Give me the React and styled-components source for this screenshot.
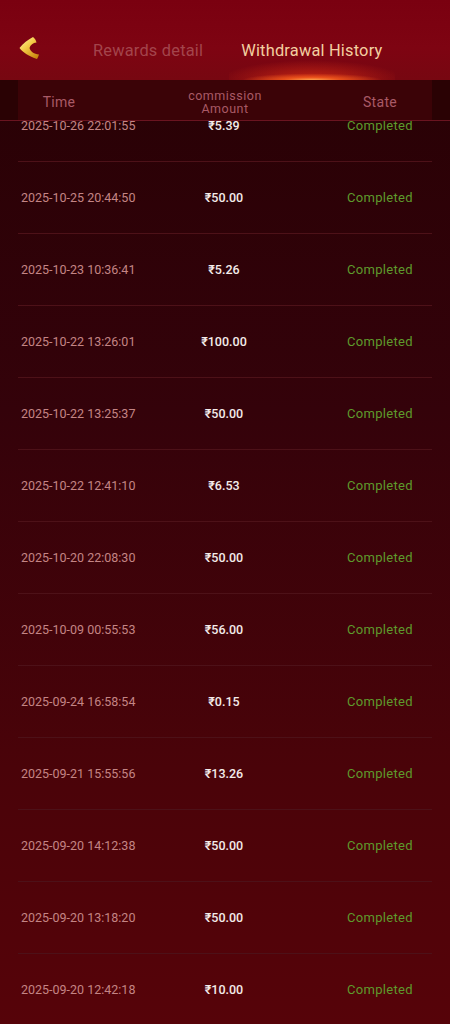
import React from 'react';
import styled, { createGlobalStyle } from 'styled-components';

const GlobalStyle = createGlobalStyle`
  html, body {
    margin: 0;
    padding: 0;
    background: #2a0204;
  }
  body {
    font-family: Roboto, "Noto Sans", sans-serif;
  }
`

const Page = styled.div`
  width: 450px;
  height: 1024px;
  overflow: hidden;
  display: flex;
  flex-direction: column;
  background: linear-gradient(180deg, #260104 0%, #34020a 40%, #4a0309 75%, #560309 100%);
`

const TopBar = styled.header`
  position: relative;
  z-index: 2;
  height: 80px;
  flex-shrink: 0;
  display: flex;
  align-items: flex-end;
  padding: 0 0 0 17px;
  box-sizing: border-box;
  background: linear-gradient(180deg, #7a0010 0%, #7e0412 60%, #770711 100%);
`

const Back = styled.button`
  width: 24px;
  height: 24px;
  padding: 0;
  margin-bottom: 20px;
  border: none;
  background: none;
  display: flex;
  align-items: center;
  justify-content: center;
`

const Tabs = styled.nav`
  display: flex;
  margin-left: 52px;
  gap: 38px;
`

const Tab = styled.div`
  position: relative;
  font-size: 16.4px;
  letter-spacing: 0.2px;
  padding-bottom: 20px;
  color: ${p => (p.active ? '#f3cfa0' : '#a3444c')};

  span {
    position: relative;
    z-index: 1;
  }

  &::after {
    content: '';
    display: ${p => (p.active ? 'block' : 'none')};
    position: absolute;
    left: -12px;
    right: -12px;
    bottom: 0;
    height: 22px;
    background:
      radial-gradient(ellipse 42% 30% at 50% 100%, rgba(255, 170, 80, 0.95) 0%, rgba(255, 100, 30, 0.7) 40%, rgba(255, 60, 20, 0) 100%),
      radial-gradient(ellipse 55% 90% at 50% 100%, rgba(230, 50, 20, 0.7) 0%, rgba(200, 20, 20, 0) 100%);
  }
`

const HeadWrap = styled.div`
  position: relative;
  z-index: 2;
  flex-shrink: 0;
  height: 41px;
  box-sizing: border-box;
  padding: 0 18px;
  background: #2a0204;
  border-bottom: 1px solid #6a1420;
`

const HeadRow = styled.div`
  height: 100%;
  display: grid;
  grid-template-columns: 82px 250px 1fr;
  align-items: center;
  background: #3b0307;
  color: #a95a66;
`

const HeadCell = styled.div`
  font-size: ${p => (p.small ? '12.5px' : '14px')};
  line-height: ${p => (p.small ? '13px' : '16px')};
  text-align: center;
  padding-top: 4px;
  padding-right: ${p => p.pr || '0'};
  letter-spacing: ${p => (p.small ? '0.5px' : '0.3px')};
`

const List = styled.div`
  margin-top: -31px;
  padding: 0 18px;
`

const Row = styled.div`
  height: 71px;
  display: grid;
  grid-template-columns: 140px 134px 1fr;
  align-items: center;
  border-bottom: 1px solid #4d1118;
`

const DateCell = styled.div`
  font-size: 12.5px;
  color: #c48585;
  padding-left: 3px;
  white-space: nowrap;
`

const Amount = styled.div`
  font-size: 12.5px;
  font-weight: 500;
  color: #f4ecea;
  text-align: center;
  padding-right: 2px;
`

const State = styled.div`
  font-size: 13px;
  color: #5e9a2c;
  text-align: center;
  padding-left: 36px;
  letter-spacing: 0.3px;
`

const rows = [
  ['2025-10-26 22:01:55', '₹5.39'],
  ['2025-10-25 20:44:50', '₹50.00'],
  ['2025-10-23 10:36:41', '₹5.26'],
  ['2025-10-22 13:26:01', '₹100.00'],
  ['2025-10-22 13:25:37', '₹50.00'],
  ['2025-10-22 12:41:10', '₹6.53'],
  ['2025-10-20 22:08:30', '₹50.00'],
  ['2025-10-09 00:55:53', '₹56.00'],
  ['2025-09-24 16:58:54', '₹0.15'],
  ['2025-09-21 15:55:56', '₹13.26'],
  ['2025-09-20 14:12:38', '₹50.00'],
  ['2025-09-20 13:18:20', '₹50.00'],
  ['2025-09-20 12:42:18', '₹10.00'],
];

const BackIcon = () => (
  <svg width="22" height="24" viewBox="0 0 22 24">
    <defs>
      <linearGradient id="gold" x1="0" y1="0" x2="0.8" y2="1">
        <stop offset="0" stopColor="#fff6b0" />
        <stop offset="0.45" stopColor="#f4cc48" />
        <stop offset="1" stopColor="#c8860e" />
      </linearGradient>
    </defs>
    <path
      d="M15 1 C10 3.5 5 7.5 1.5 12 C5 16.5 11 20.5 19 23 C20 21.5 20.5 20 21 18.5 C16 18 12.5 15.5 11.5 12 C12.5 8.5 15 7 18.5 6.5 C18 4.5 17 2.5 15 1 Z"
      fill="url(#gold)"
    />
  </svg>
);

export default function App() {
  return (
    <>
      <GlobalStyle />
      <Page>
        <TopBar>
          <Back aria-label="back">
            <BackIcon />
          </Back>
          <Tabs>
            <Tab><span>Rewards detail</span></Tab>
            <Tab active><span>Withdrawal History</span></Tab>
          </Tabs>
        </TopBar>
        <HeadWrap>
          <HeadRow>
            <HeadCell>Time</HeadCell>
            <HeadCell small>commission<br />Amount</HeadCell>
            <HeadCell pr="22px">State</HeadCell>
          </HeadRow>
        </HeadWrap>
        <List>
          {rows.map(([date, amount]) => (
            <Row key={date}>
              <DateCell>{date}</DateCell>
              <Amount>{amount}</Amount>
              <State>Completed</State>
            </Row>
          ))}
        </List>
      </Page>
    </>
  );
}
